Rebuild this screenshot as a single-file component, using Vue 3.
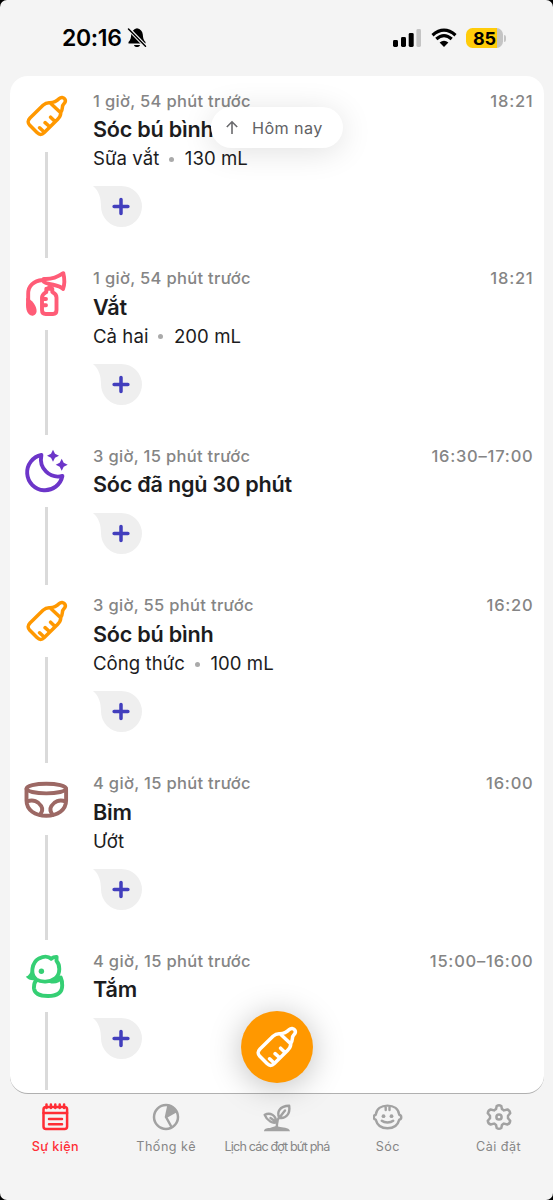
<script setup>
const events = [
  { icon: 'bottle', color: '#ff9800', ago: '1 giờ, 54 phút trước', time: '18:21', title: 'Sóc bú bình', details: ['Sữa vắt', '130 mL'] },
  { icon: 'pump', color: '#ff5c77', ago: '1 giờ, 54 phút trước', time: '18:21', title: 'Vắt', details: ['Cả hai', '200 mL'] },
  { icon: 'moon', color: '#6c35c9', ago: '3 giờ, 15 phút trước', time: '16:30–17:00', title: 'Sóc đã ngủ 30 phút', details: [] },
  { icon: 'bottle', color: '#ff9800', ago: '3 giờ, 55 phút trước', time: '16:20', title: 'Sóc bú bình', details: ['Công thức', '100 mL'] },
  { icon: 'diaper', color: '#9c6864', ago: '4 giờ, 15 phút trước', time: '16:00', title: 'Bỉm', details: ['Ướt'] },
  { icon: 'duck', color: '#35cf74', ago: '4 giờ, 15 phút trước', time: '15:00–16:00', title: 'Tắm', details: [] },
]
const tabs = [
  { icon: 'calendar', label: 'Sự kiện', active: true },
  { icon: 'chart', label: 'Thống kê' },
  { icon: 'sprout', label: 'Lịch các đợt bứt phá', tight: true },
  { icon: 'baby', label: 'Sóc' },
  { icon: 'gear', label: 'Cài đặt' },
]
</script>

<template>
  <div class="phone">
    <svg width="0" height="0" class="defs">
      <symbol id="bottle" viewBox="0 0 44 44">
        <path d="M26 8.8C23.5 8.5 21 9.5 19 11.3L6 24C3.4 26.8 3.4 28.6 5.8 31.3L13 38.6C15.5 41.2 17.8 41.2 20.3 38.6L33.5 25.5C36 23 37 21 36.7 18.7ZM26 8.8C31 8.5 32.8 7 35.3 4.5C37 2.8 39.5 3.2 40.6 4.8C41.8 6.5 41.4 8.4 39.8 9.9C37.4 12 39.3 15.5 36.7 18.7M15.6 33.8L18.8 36.8M21.1 28.6L24.6 31.8M26.6 23.2L30.3 26.8" />
      </symbol>
      <symbol id="pump" viewBox="0 0 44 44" class="open">
        <path d="M20 7C27 7.5 33 5.5 39.3 1.2C40.5 6 40.8 12 39 17C35 12.8 30 13.5 22 11C18.5 9.5 18 7.3 20 7ZM18.5 8C10 9 4 13.5 4.2 22V28M25.3 12.5V16M22.3 16.8H28.3V20C31 21.3 32.5 22.5 32.5 25.5V38Q32.5 42 29 42H21.7Q18 42 18 38V25.5C18 22.5 20 21.5 22.3 20ZM18.5 27H22M18.5 33.2H22" />
        <path class="fill" d="M2.2 26C8 27 12.6 34 12.6 39C12.6 42 10 44.3 7 43.6C3 42 2 37 2 33Z" />
      </symbol>
      <symbol id="moon" viewBox="0 0 44 44">
        <path d="M17.4 6A17.8 17.8 0 1 0 38.4 27C26 30 14.5 19.5 17.4 6Z" />
        <path class="fill" d="M29 .8L31 4.8L35 6.8L31 8.8L29 12.8L27 8.8L23 6.8L27 4.8ZM37.7 9.8L39.7 13.8L43.7 15.8L39.7 17.8L37.7 21.8L35.7 17.8L31.7 15.8L35.7 13.8Z" />
      </symbol>
      <symbol id="diaper" viewBox="0 0 44 44" class="open">
        <ellipse cx="22.3" cy="11.6" rx="19.8" ry="4.8" />
        <path d="M2.5 12V23.5C2.5 33 11 38.8 22.3 38.8S42.1 33 42.1 23.5V12M3.2 24.5C9 22 14.5 24.5 17.2 29C19 32 18.3 35 15.6 38M41.4 24.5C35.6 22 30.1 24.5 27.4 29C25.6 32 26.3 35 29 38" />
      </symbol>
      <symbol id="duck" viewBox="0 0 44 44">
        <path d="M12.5 25.5C5.5 20.5 8 8.3 15 4.4C21 1.5 25 2.8 27.2 4.8C29 3.3 30.5 2.8 32.6 2.9L32.5 6.8C36 10.5 36.8 20 31.3 24.3C26 28.5 17 28.5 12.5 25.5ZM12.5 26C10.5 28 9.7 30.5 10 34.5C10.7 40 15.5 42 24 42C33 42 38.2 38.8 38.2 31.5C38.2 28 38 26 36.8 23.6C34.8 27 32.5 28 27.5 27.5" />
        <path class="fill" d="M1.8 22.8C5 21.5 6.3 19 7.2 16.2L13.4 25.7C8.5 27 4.5 26.3 1.8 22.8Z" />
        <circle class="fill" cx="17.4" cy="17.3" r="2.7" />
      </symbol>
      <symbol id="calendar" viewBox="0 0 30 30">
        <rect x="3.5" y="5" width="23.6" height="22" rx="2.5" />
        <path d="M3.5 11H27.1M9 17H22M9 22.2H22M6.5 2.4V6M10.9 2.4V6M15.3 2.4V6M19.7 2.4V6M24.1 2.4V6" />
      </symbol>
      <symbol id="chart" viewBox="0 0 30 30">
        <circle cx="15" cy="15" r="12" /><path d="M15 15L17.5 3.5M15 15L20.5 25M15 15L24.8 9.5" />
        <path class="fill" d="M15 15L17.5 3A12 12 0 0 1 25.3 9Z" />
      </symbol>
      <symbol id="sprout" viewBox="0 0 30 30">
        <path d="M14.5 27C15.5 20 14.5 18 17.5 14.5M17.3 15.8C14.5 10 17.5 4 27.2 3.8C28.3 12 24 17 17.3 15.8ZM17.3 15.8L23 8.5M14.2 20C11.5 22 5 19 2.7 12.8C8 10.2 14 13 14.2 20ZM14.2 20L8.5 16" />
        <path class="fill" d="M2 29.2C2 26.5 5 25.8 8 26C12 25.2 14 23 17 24.8C20 26 27 25 28 29.2Z" />
      </symbol>
      <symbol id="baby" viewBox="1.5 0 30 30" class="open">
        <path d="M4.2 12.8C5 7 9.6 3.6 16 3.6S27 7 27.8 12.8C30.4 13.2 30.4 17.2 27.8 17.6C26.4 23 22 26.3 16 26.3S5.6 23 4.2 17.6C1.6 17.2 1.6 13.2 4.2 12.8ZM10.3 18.8C13 21 19 21 21.7 18.8M14.2 4.5V8M18 4.5V8" />
        <circle class="fill" cx="12" cy="14.2" r="1.9" /><circle class="fill" cx="20" cy="14.2" r="1.9" />
      </symbol>
      <symbol id="gear" viewBox="0 0 30 30">
        <path d="M12.7 4Q15 2.5 17.3 4L18 7.2Q19 7.6 20 8.4L23.4 7.5Q26 8.5 26.2 11.2L24 13.8V16.2L26.2 18.8Q26 21.5 23.4 22.5L20 21.6Q19 22.4 18 22.8L17.3 26Q15 27.5 12.7 26L12 22.8Q11 22.4 10 21.6L6.6 22.5Q4 21.5 3.8 18.8L6 16.2V13.8L3.8 11.2Q4 8.5 6.6 7.5L10 8.4Q11 7.6 12 7.2Z" />
        <circle cx="15" cy="15" r="2.6" />
      </symbol>
    </svg>

    <header class="status">
      <span class="clock">20:16</span>
      <svg class="bell" width="20" height="22" viewBox="0 0 20 22">
        <path d="M1.5 16.5V15C3.6 13 4 11 4.2 7.5C4.5 4 7 2 10 1.2C13.5 2 15.5 4 15.8 7.5C16 11 16.4 13 18.5 15V16.5ZM7 18H13C12.6 20.7 7.4 20.7 7 18Z" />
        <path d="M1.8 2L18.2 19" stroke="#f4f4f4" stroke-width="3.6" />
        <path d="M1.5 2L18.5 19.3" stroke="#000" stroke-width="1.5" stroke-linecap="round" />
      </svg>
      <svg class="signal" width="28" height="20" viewBox="0 0 28 20">
        <rect y="12" width="5" height="7" rx="1.4" /><rect x="8" y="9" width="5" height="10" rx="1.4" /><rect x="15.7" y="5" width="5" height="14" rx="1.4" /><rect x="23.4" y="1" width="4.6" height="18" rx="1.4" fill="#c4c4c4" />
      </svg>
      <svg class="wifi" width="26" height="20" viewBox="0 0 26 20">
        <path d="M1.5 7.2Q13-2.8 24.5 7.2M5.3 11Q13 4.3 20.7 11" fill="none" stroke="#000" stroke-width="3.2" />
        <path d="M8.6 14.4Q13 11 17.4 14.4L13 19Z" />
      </svg>
      <span class="battery"><span>85</span></span><i class="nub"></i>
    </header>

    <main class="card">
      <article v-for="(e, i) in events" :key="i" class="row" :class="{ short: !e.details.length }">
        <div class="rail">
          <svg class="icon" :class="e.icon" :style="{ color: e.color }"><use :href="'#' + e.icon" /></svg>
          <i class="line"></i>
        </div>
        <div class="body">
          <div class="meta"><span class="ago">{{ e.ago }}</span><span class="time">{{ e.time }}</span></div>
          <h2>{{ e.title }}</h2>
          <div v-if="e.details.length" class="details">
            <template v-for="(d, j) in e.details" :key="j"><i v-if="j" class="dot"></i><span>{{ d }}</span></template>
          </div>
          <svg class="bubble" width="49" height="41" viewBox="0 0 49 41">
            <path d="M0 0H28.5A20.5 20.5 0 1 1 8 20.5C8 12 6 5 0 0Z" fill="#efefef" />
            <path d="M28 13.6V27.4M21.1 20.5H34.9" stroke="#423ebd" stroke-width="3.5" stroke-linecap="round" />
          </svg>
        </div>
      </article>
    </main>

    <button class="today">
      <svg width="14" height="16" viewBox="0 0 14 16"><path d="M7 14V2M1.8 7L7 1.8L12.2 7" fill="none" stroke="#6a6a6d" stroke-width="1.6" /></svg>
      <span>Hôm nay</span>
    </button>
    <button class="fab"><svg class="icon"><use href="#bottle" /></svg></button>

    <nav>
      <div v-for="t in tabs" :key="t.icon" class="tab" :class="{ active: t.active, tight: t.tight }">
        <svg class="tab-icon"><use :href="'#' + t.icon" /></svg>
        <span>{{ t.label }}</span>
      </div>
    </nav>
  </div>
</template>

<style>
body { background: #000; margin: 0; }
</style>

<style scoped>
.phone { position: relative; width: 553px; height: 1200px; overflow: hidden; background: #f4f4f4; border-radius: 7px; font-family: Inter, "Noto Sans", sans-serif; display: flex; flex-direction: column; }
.defs { position: absolute; }
symbol path, symbol circle, symbol ellipse, symbol rect { fill: none; stroke: currentColor; stroke-width: 3.9; stroke-linecap: round; stroke-linejoin: round; }
symbol .fill { fill: currentColor; stroke-width: 0; }
.open { overflow: visible; }
#bottle path { stroke-width: 3.5; }
#calendar *, #chart *, #gear * { stroke-width: 2.5; }
#sprout *, #baby * { stroke-width: 2.4; }
#calendar .fill, #chart .fill, #sprout .fill, #baby .fill { stroke-width: 0; }
.status { height: 76px; flex: none; display: flex; align-items: center; box-sizing: border-box; padding-left: 62px; }
.clock { font-size: 23px; font-weight: 600; width: 65px; letter-spacing: -.35px; white-space: nowrap; }
.signal { margin-left: 246px; }
.wifi { margin-left: 10px; }
.battery { margin-left: 9px; width: 37px; height: 20px; border-radius: 6.5px; background: linear-gradient(90deg, #ffcc0a 31px, #c4c4c4 31px); font-size: 18px; font-weight: 700; display: flex; justify-content: center; align-items: center; }
.nub { width: 2px; height: 7px; margin-left: 1px; border-radius: 0 3px 3px 0; background: #c4c4c4; }
.card { margin-left: 10px; width: 534px; height: 1018px; flex: none; box-sizing: border-box; background: #fff; border-radius: 18px; border-bottom: 1.5px solid #b0b0b0; padding-top: 4px; overflow: hidden; }
.row { height: 177.7px; display: flex; }
.row.short { height: 149.6px; }
.rail { width: 83px; padding-top: 14px; box-sizing: border-box; display: flex; flex-direction: column; }
.icon { width: 44px; height: 44px; margin-left: 14px; overflow: visible; flex: none; }
.line { margin: 14px 0 0 35px; width: 3px; flex: 1; background: #dadada; }
.body { flex: 1; padding: 10.5px 11px 0 0; }
.meta { height: 20px; line-height: 20px; display: flex; justify-content: space-between; font-size: 16.5px; font-weight: 500; color: #858585; letter-spacing: .32px; }
.time { letter-spacing: .78px; margin-right: -.5px; }
h2 { margin: 4.4px 0 0; height: 29px; line-height: 29px; font-size: 21.6px; font-weight: 600; color: #1c1c1e; letter-spacing: -.22px; }
.details { height: 28.2px; line-height: 30px; font-size: 18.6px; color: #1c1c1e; display: flex; align-items: center; letter-spacing: .04px; padding-top: .4px; box-sizing: border-box; }
.dot { width: 5px; height: 5px; border-radius: 50%; background: #aaa; margin: 2px 10.5px 0 10px; }
.bubble { display: block; margin-top: 13.9px; }
button { border: 0; font-family: inherit; padding: 0; }
.today { position: absolute; left: 211px; top: 107px; width: 132px; height: 41px; border-radius: 21px; background: #fff; box-shadow: 0 4px 32px rgba(0,0,0,.12); display: flex; align-items: center; padding-left: 14px; gap: 13px; font-size: 16.2px; font-weight: 400; color: #626265; letter-spacing: .4px; white-space: nowrap; }
.fab { position: absolute; left: 241px; top: 1011px; width: 72px; height: 72px; border-radius: 50%; background: #ff9800; color: #fff; box-shadow: 0 4px 32px rgba(0,0,0,.25); }
.fab .icon { display: block; margin-left: 13px; }
nav { display: grid; grid-template-columns: repeat(5, 110.8px); padding-top: 8px; }
.tab { display: flex; flex-direction: column; align-items: center; color: #a2a2a2; font-size: 12.6px; font-weight: 400; letter-spacing: .5px; white-space: nowrap; }
.tab span { height: 20px; line-height: 20px; margin-top: 5px; color: #868686; }
.tab.active { font-weight: 500; letter-spacing: .35px; }
.tab.active, .tab.active span { color: #ff2d35; }
.tight span { letter-spacing: -.85px; }
.tab-icon { width: 30px; height: 30px; }
</style>
